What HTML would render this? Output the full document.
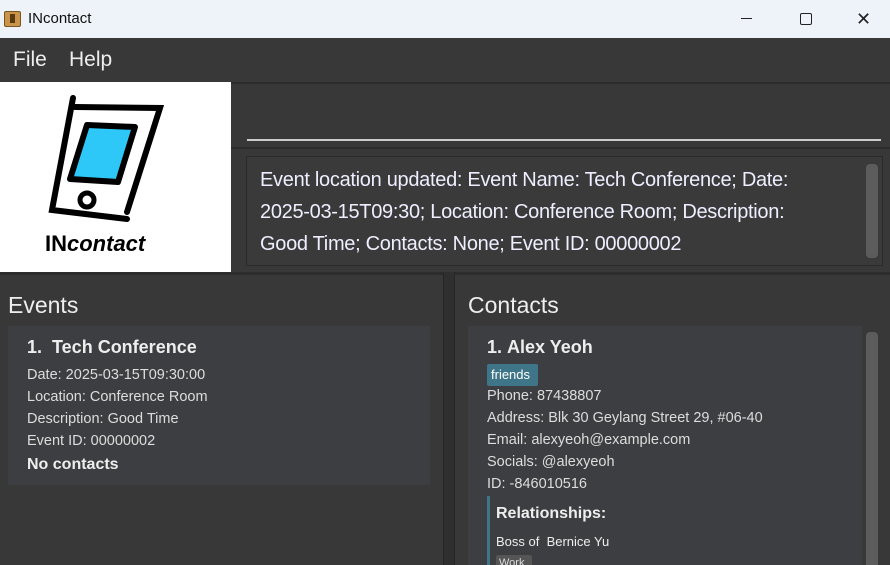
<!DOCTYPE html>
<html><head><meta charset="utf-8"><style>
*{margin:0;padding:0;box-sizing:border-box}
html,body{width:890px;height:565px;overflow:hidden}
body{background:#383838;font-family:"Liberation Sans",sans-serif;position:relative;color:#fff}
.a{position:absolute}
.t{font-size:14.5px;color:#ddd;white-space:nowrap}
</style></head><body>
<div class="a" style="left:0;top:0;width:890px;height:38px;background:#eef2f9"></div>
<div class="a" style="left:4px;top:11px;width:17px;height:16px;background:#c9954a;border:1px solid #7a5520;border-radius:2px"></div>
<div class="a" style="left:10px;top:14px;width:5px;height:9px;background:#5a3a10"></div>
<div class="a t" style="left:28px;top:10px;font-size:15px;color:#111">INcontact</div>
<div class="a" style="left:741px;top:18px;width:11px;height:1px;background:#222"></div>
<div class="a" style="left:800px;top:13px;width:12px;height:12px;border:1.3px solid #222;border-radius:2px"></div>
<div class="a" style="left:856px;top:9px;font-size:18px;color:#222">✕</div>
<div class="a" style="left:0;top:38px;width:890px;height:44px;background:#383838"></div>
<div class="a" style="left:13px;top:48px;font-size:21px;color:#eee">File</div>
<div class="a" style="left:69px;top:48px;font-size:21px;color:#eee">Help</div>
<div class="a" style="left:0;top:82px;width:890px;height:2px;background:#2c2c2c"></div>
<div class="a" style="left:0;top:82px;width:231px;height:190px;background:#fff"></div>
<svg class="a" style="left:45px;top:95px" width="125" height="130" viewBox="0 0 125 130">
<path d="M28 3 L7 115 L82 124" fill="none" stroke="#000" stroke-width="6" stroke-linecap="round"/>
<path d="M30 12 L115 13 L82 117" fill="none" stroke="#000" stroke-width="6" stroke-linecap="round"/>
<path d="M42 30 L90 32 L73 87 L25 84 Z" fill="#2dc8f8" stroke="#000" stroke-width="6" stroke-linejoin="round"/>
<circle cx="42" cy="105" r="7" fill="none" stroke="#000" stroke-width="5"/>
</svg>
<div class="a" style="left:45px;top:231px;font-size:22px;font-weight:bold;color:#000">IN<i>contact</i></div>
<div class="a" style="left:247px;top:139px;width:634px;height:2px;background:#ccc"></div>
<div class="a" style="left:231px;top:147px;width:659px;height:2px;background:#2c2c2c"></div>
<div class="a" style="left:246px;top:156px;width:637px;height:110px;background:#3a3a3a;border:1px solid #2a2a2a"></div>
<div class="a" style="left:866px;top:164px;width:12px;height:94px;background:#5c5c5c;border-radius:4px"></div>
<div class="a" style="left:260px;top:164px;font-size:20px;line-height:32px;color:#eef;width:570px;letter-spacing:-0.3px">Event location updated: Event Name: Tech Conference; Date: 2025-03-15T09:30; Location: Conference Room; Description: Good Time; Contacts: None; Event ID: 00000002</div>
<div class="a" style="left:0;top:272px;width:890px;height:3px;background:#2c2c2c"></div>
<div class="a" style="left:443px;top:272px;width:12px;height:293px;background:#2f2f2f;border-left:1px solid #262626;border-right:1px solid #262626"></div>
<div class="a" style="left:8px;top:292px;font-size:23px;color:#eee">Events</div>
<div class="a" style="left:8px;top:326px;width:422px;height:159px;background:#3d3e41"></div>
<div class="a" style="left:27px;top:337px;font-size:18px;font-weight:bold;color:#eee">1.&nbsp; Tech Conference</div>
<div class="a t" style="left:27px;top:364px;line-height:22px">Date: 2025-03-15T09:30:00<br>Location: Conference Room<br>Description: Good Time<br>Event ID: 00000002</div>
<div class="a" style="left:27px;top:456px;font-size:16px;font-weight:bold;color:#eee">No contacts</div>
<div class="a" style="left:468px;top:292px;font-size:23px;color:#eee">Contacts</div>
<div class="a" style="left:468px;top:326px;width:394px;height:239px;background:#3d3e41"></div>
<div class="a" style="left:866px;top:332px;width:12px;height:240px;background:#5c5c5c;border-radius:4px"></div>
<div class="a" style="left:487px;top:337px;font-size:18px;font-weight:bold;color:#eee">1.&nbsp;Alex Yeoh</div>
<div class="a" style="left:487px;top:364px;width:51px;height:22px;background:#3e7588;border-radius:2px;font-size:13px;color:#fff;padding:3px 4px">friends</div>
<div class="a t" style="left:487px;top:385px;line-height:22px">Phone: 87438807<br>Address: Blk 30 Geylang Street 29, #06-40<br>Email: alexyeoh@example.com<br>Socials: @alexyeoh<br>ID: -846010516</div>
<div class="a" style="left:487px;top:496px;width:3px;height:69px;background:#3e7588"></div>
<div class="a" style="left:496px;top:505px;font-size:16px;font-weight:bold;color:#eee">Relationships:</div>
<div class="a" style="left:496px;top:534px;font-size:13px;color:#eee">Boss of&nbsp; Bernice Yu</div>
<div class="a" style="left:496px;top:555px;width:36px;height:14px;background:#555;border-radius:2px;font-size:11px;color:#ddd;padding:2px 3px">Work</div>
</body></html>
